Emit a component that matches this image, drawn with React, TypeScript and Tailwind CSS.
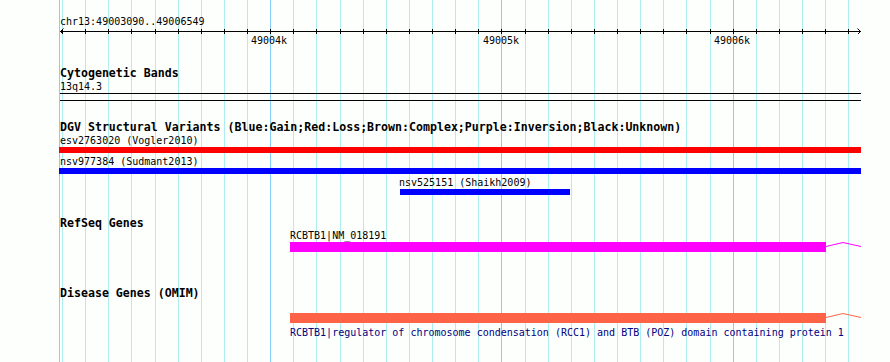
import React from "react";

const MONO = { fontFamily: '"DejaVu Sans Mono", "Liberation Mono", monospace' };

const gridX = (d: number) => Math.floor(60.3 + d * 0.23125);
const ticks = Array.from({ length: 35 }, (_, k) => 10 + k * 100);

function Grid() {
  return (
    <svg className="absolute inset-0" width={890} height={362} shapeRendering="crispEdges">
      <rect x={59} y={0} width={1} height={362} fill="#87cefa" />
      {ticks.map((d) => (
        <rect
          key={d}
          x={gridX(d)}
          y={0}
          width={1}
          height={362}
          fill={(d + 90) % 1000 === 0 ? "#87cefa" : "#afeeee"}
        />
      ))}
    </svg>
  );
}

function Ruler() {
  return (
    <svg width={890} height={6} className="block" shapeRendering="crispEdges">
      <rect x={60} y={3} width={801} height={1} fill="#000" />
      {ticks.map((d) => (
        <rect key={d} x={gridX(d)} y={1} width={1} height={5} fill="#000" />
      ))}
      <polyline points="63.5,0.5 60.5,3.5 63.5,6.5" fill="none" stroke="#000" strokeWidth={1} shapeRendering="auto" />
      <polyline points="857.5,0.5 860.5,3.5 857.5,6.5" fill="none" stroke="#000" strokeWidth={1} shapeRendering="auto" />
    </svg>
  );
}

function Hat({ color }: { color: string }) {
  return (
    <svg width={35} height={10} className="block shrink-0">
      <polyline points="0,4.5 17,0.5 35,4.5" fill="none" stroke={color} strokeWidth={1} />
    </svg>
  );
}

export default function App() {
  return (
    <div className="relative w-[890px] h-[362px] overflow-hidden bg-[#fdfffd] text-black" style={MONO}>
      <Grid />
      <div className="relative flex flex-col">
        <div className="h-[15px]" />
        <div className="h-[13px] pl-[60px] text-[10px] leading-[13px] whitespace-pre">chr13:49003090..49006549</div>
        <Ruler />
        <div className="h-[13px] flex text-[10px] leading-[13px]">
          <div className="ml-[251px] w-[36px] whitespace-pre">49004k</div>
          <div className="ml-[196px] w-[36px] whitespace-pre">49005k</div>
          <div className="ml-[195px] w-[36px] whitespace-pre">49006k</div>
        </div>
        <div className="h-[20px]" />
        <div className="h-[13px] pl-[60px] text-[11.6px] font-bold leading-[13px] whitespace-pre">Cytogenetic Bands</div>
        <div className="h-[13px] pl-[60px] text-[10px] leading-[13px] whitespace-pre">13q14.3</div>
        <div className="ml-[60px] w-[801px] h-[8px] border-t border-b border-black" />
        <div className="h-[20px]" />
        <div className="h-[13px] pl-[60px] text-[11.6px] font-bold leading-[13px] whitespace-pre">
          DGV Structural Variants (Blue:Gain;Red:Loss;Brown:Complex;Purple:Inversion;Black:Unknown)
        </div>
        <div className="h-[13px] pl-[60px] text-[10px] leading-[13px] whitespace-pre">esv2763020 (Vogler2010)</div>
        <div className="ml-[59px] w-[802px] h-[6px] bg-[#ff0000]" />
        <div className="h-[2px]" />
        <div className="h-[13px] pl-[60px] text-[10px] leading-[13px] whitespace-pre">nsv977384 (Sudmant2013)</div>
        <div className="ml-[59px] w-[802px] h-[6px] bg-[#0000ff]" />
        <div className="h-[2px]" />
        <div className="h-[13px] pl-[399px] text-[10px] leading-[13px] whitespace-pre">nsv525151 (Shaikh2009)</div>
        <div className="ml-[400px] w-[170px] h-[6px] bg-[#0000ff]" />
        <div className="h-[22px]" />
        <div className="h-[12px] pl-[60px] text-[11.6px] font-bold leading-[13px] whitespace-pre">RefSeq Genes</div>
        <div className="h-[13px] pl-[290px] text-[10px] leading-[13px] whitespace-pre">RCBTB1|NM_018191</div>
        <div className="flex h-[10px]">
          <div className="ml-[290px] w-[536px] h-[10px] bg-[#ff00ff]" />
          <Hat color="#ff00ff" />
        </div>
        <div className="h-[35px]" />
        <div className="h-[13px] pl-[60px] text-[11.6px] font-bold leading-[13px] whitespace-pre">Disease Genes (OMIM)</div>
        <div className="h-[13px]" />
        <div className="flex h-[10px]">
          <div className="ml-[290px] w-[536px] h-[10px] bg-[#ff6347]" />
          <Hat color="#ff6347" />
        </div>
        <div className="h-[3px]" />
        <div className="h-[13px] pl-[290px] text-[10px] leading-[13px] whitespace-pre text-[#000080]">
          RCBTB1|regulator of chromosome condensation (RCC1) and BTB (POZ) domain containing protein 1
        </div>
      </div>
    </div>
  );
}
